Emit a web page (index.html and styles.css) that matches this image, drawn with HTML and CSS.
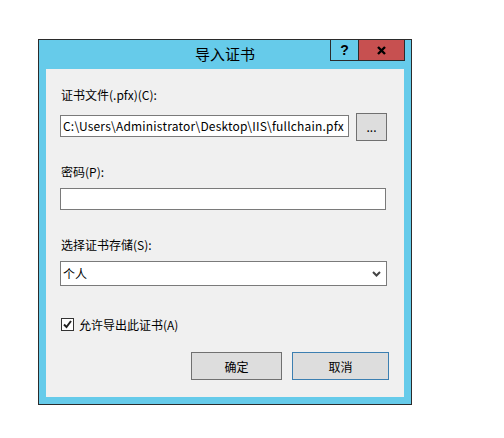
FILE: index.html
```html
<!DOCTYPE html>
<html lang="zh-CN">
<head>
  <meta charset="UTF-8">
  <title>导入证书</title>
  <link rel="stylesheet" href="styles.css">
</head>
<body>
  <div class="window">
    <!-- Title bar -->
    <div class="titlebar">
      <span class="title">导入证书</span>
      <div class="caption-buttons">
        <span class="cap-btn help">?</span>
        <span class="cap-btn close">
          <svg width="9" height="9" viewBox="0 0 9 9">
            <path d="M1 1 L8 8 M8 1 L1 8" stroke="#000" stroke-width="2.4" fill="none"/>
          </svg>
        </span>
      </div>
    </div>

    <!-- Client area -->
    <div class="client">
      <div class="label">证书文件(.pfx)(C):</div>
      <div class="file-row">
        <div class="textbox file-box">C:\Users\Administrator\Desktop\IIS\fullchain.pfx</div>
        <div class="btn browse">...</div>
      </div>

      <div class="label label-pwd">密码(P):</div>
      <div class="textbox pwd-box"></div>

      <div class="label label-store">选择证书存储(S):</div>
      <div class="textbox select-box">
        <span>个人</span>
        <svg class="chevron" width="9" height="6" viewBox="0 0 9 6">
          <path d="M1 1 L4.5 4.5 L8 1" stroke="#444" stroke-width="2" fill="none"/>
        </svg>
      </div>

      <div class="check-row">
        <span class="checkbox">
          <svg width="11" height="11" viewBox="0 0 11 11">
            <path d="M2 5.5 L4.5 8 L9 2" stroke="#222" stroke-width="2" fill="none"/>
          </svg>
        </span>
        <span>允许导出此证书(A)</span>
      </div>

      <div class="button-row">
        <div class="btn ok">确定</div>
        <div class="btn cancel">取消</div>
      </div>
    </div>
  </div>
</body>
</html>
```

FILE: styles.css
```css
* {
  margin: 0;
  padding: 0;
  box-sizing: border-box;
}

body {
  background-color: #fff;
  font-family: "Noto Sans CJK SC", "Liberation Sans", sans-serif;
  font-size: 12px;
  color: #000;
}

/* Window frame */
.window {
  width: 374px;
  height: 366px;
  margin: 39px 0 0 38px;
  border: 1px solid #2b2b2b;
  background-color: #66cbea;
  padding: 0 7px 7px 7px;
}

.titlebar {
  position: relative;
  height: 29px;
  margin: 0 -7px;
  text-align: center;
}

.title {
  font-size: 15px;
  line-height: 28px;
}

.caption-buttons {
  position: absolute;
  top: -1px;
  right: 6px;
  display: flex;
}

.cap-btn {
  display: flex;
  align-items: center;
  justify-content: center;
  height: 22px;
  border: 1px solid #2b2b2b;
}

.cap-btn.help {
  width: 29px;
  font-family: "Liberation Sans", sans-serif;
  font-weight: bold;
  font-size: 14px;
}

.cap-btn.close {
  width: 47px;
  margin-left: -1px;
  background-color: #c75050;
}

/* Client area */
.client {
  height: 328px;
  background-color: #f0f0f0;
  padding: 18px 15px 0 14px;
}

.label {
  height: 16px;
  line-height: 16px;
  padding-left: 1px;
}

.textbox {
  height: 22px;
  line-height: 20px;
  border: 1px solid #7a7a7a;
  background-color: #fff;
  padding-left: 2px;
  white-space: nowrap;
  overflow: hidden;
}

.file-row {
  display: flex;
  gap: 7px;
  margin-top: 10px;
  height: 28px;
}

.file-box {
  width: 289px;
  margin-top: 2px;
  letter-spacing: 0.2px;
}

.btn {
  display: flex;
  align-items: center;
  justify-content: center;
  height: 28px;
  border: 1px solid #707070;
  background-color: #dddddd;
}

.browse {
  width: 31px;
  padding-bottom: 2px;
}

.label-pwd {
  margin-top: 23px;
}

.pwd-box {
  width: 326px;
  margin-top: 8px;
}

.label-store {
  margin-top: 27px;
}

.select-box {
  display: flex;
  align-items: center;
  justify-content: space-between;
  width: 327px;
  height: 25px;
  margin-top: 8px;
  padding: 0 5px 0 2px;
}

.chevron {
  margin-top: 1px;
}

.check-row {
  display: flex;
  align-items: center;
  gap: 5px;
  height: 16px;
  margin-top: 30px;
  padding-left: 1px;
}

.checkbox {
  display: flex;
  align-items: center;
  justify-content: center;
  width: 13px;
  height: 13px;
  border: 1px solid #333;
  background-color: #fff;
}

.button-row {
  display: flex;
  justify-content: flex-end;
  gap: 10px;
  margin-top: 20px;
}

.ok {
  width: 91px;
}

.cancel {
  width: 97px;
  border-color: #3c7fb1;
}
```
